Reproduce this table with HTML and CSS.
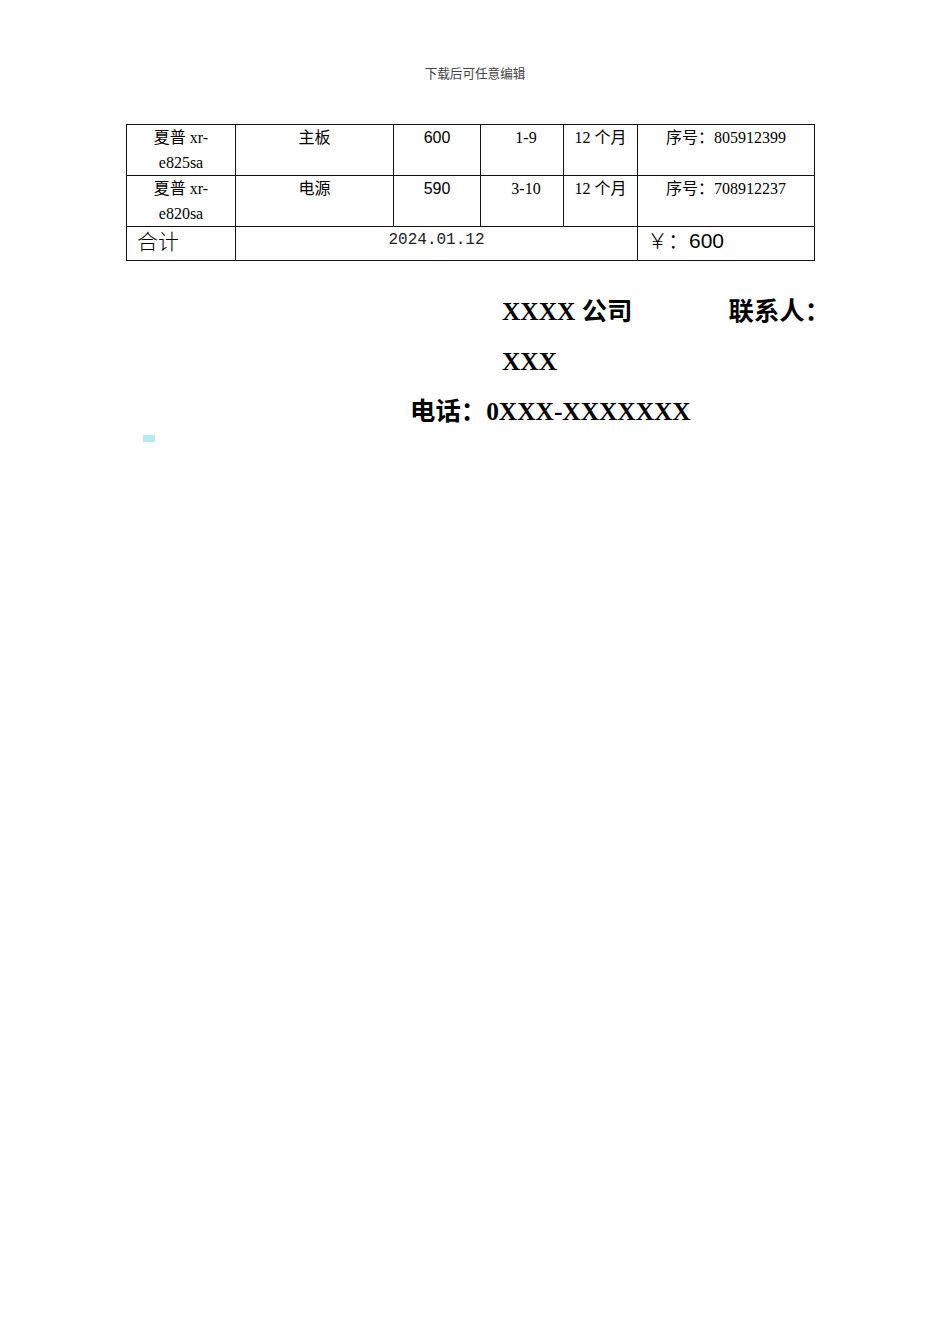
FILE: index.html
```html
<!DOCTYPE html>
<html lang="zh">
<head>
<meta charset="utf-8">
<title>清单</title>
<link rel="stylesheet" href="styles.css">
</head>
<body>
<div class="page">
  <div class="header">下载后可任意编辑</div>
  <table class="list">
    <colgroup>
      <col class="c1"><col class="c2"><col class="c3"><col class="c4"><col class="c5"><col class="c6">
    </colgroup>
    <tr class="item">
      <td>夏普 xr-<br>e825sa</td>
      <td>主板</td>
      <td class="sans">600</td>
      <td class="num">1-9</td>
      <td>12 个月</td>
      <td>序号：805912399</td>
    </tr>
    <tr class="item">
      <td>夏普 xr-<br>e820sa</td>
      <td>电源</td>
      <td class="sans">590</td>
      <td class="num">3-10</td>
      <td>12 个月</td>
      <td>序号：708912237</td>
    </tr>
    <tr class="total">
      <td class="label">合计</td>
      <td colspan="4" class="date">2024.01.12</td>
      <td class="sum">￥：<span class="sans">600</span></td>
    </tr>
  </table>
  <div class="sign">
    <div class="line first"><span>XXXX 公司</span><span class="contact">联系人：</span></div>
    <div class="line">XXX</div>
    <div class="line phone">电话：0XXX-XXXXXXX</div>
  </div>
  <div class="mark"></div>
</div>
</body>
</html>
```

FILE: styles.css
```css
html, body {
  margin: 0;
  padding: 0;
  background: #fff;
}
body {
  font-family: "Liberation Serif", "Noto Sans CJK SC", serif;
  color: #000;
}
.page {
  width: 950px;
  padding-top: 66px;
}
.header {
  text-align: center;
  font-size: 12.6px;
  line-height: 16px;
  color: #444;
  height: 16px;
}
.list {
  margin: 42px 0 0 126px;
  border-collapse: collapse;
  table-layout: fixed;
  width: 688px;
}
.c1 { width: 109px; }
.c2 { width: 158px; }
.c3 { width: 87px; }
.c4 { width: 83px; }
.c5 { width: 74px; }
.c6 { width: 177px; }
.list td {
  border: 1px solid #111;
  padding: 0 2px;
  vertical-align: top;
  text-align: center;
  font-size: 16px;
  line-height: 25px;
}
.item td {
  height: 50px;
  box-sizing: border-box;
}
.item td.num { padding-left: 10px; }
.sans {
  font-family: "Liberation Sans", sans-serif;
}
.total td {
  height: 34px;
  box-sizing: border-box;
  font-size: 21px;
  line-height: 26px;
}
.total td.label {
  text-align: left;
  padding-left: 10px;
  font-family: "Noto Sans CJK SC", sans-serif;
  font-weight: 300;
}
.total td.date {
  font-family: "Liberation Mono", monospace;
  font-size: 16px;
  line-height: 27px;
  color: #222;
}
.total td.sum {
  text-align: left;
  padding-left: 9px;
  font-family: "Noto Sans CJK SC", sans-serif;
  font-weight: 300;
  line-height: 24px;
}
.total td.sum .sans { font-weight: 400; }
.sign {
  margin-top: 25px;
  font-weight: bold;
  font-size: 25.4px;
  line-height: 50px;
}
.line {
  padding-left: 502px;
  height: 50px;
  white-space: nowrap;
}
.line.first {
  display: flex;
}
.contact {
  margin-left: 96px;
}
.line.phone {
  padding-left: 410px;
}
.mark {
  margin: 0 0 0 143px;
  width: 12px;
  height: 7px;
  background: #b1e9f6;
  position: relative;
  top: -1px;
}
```
